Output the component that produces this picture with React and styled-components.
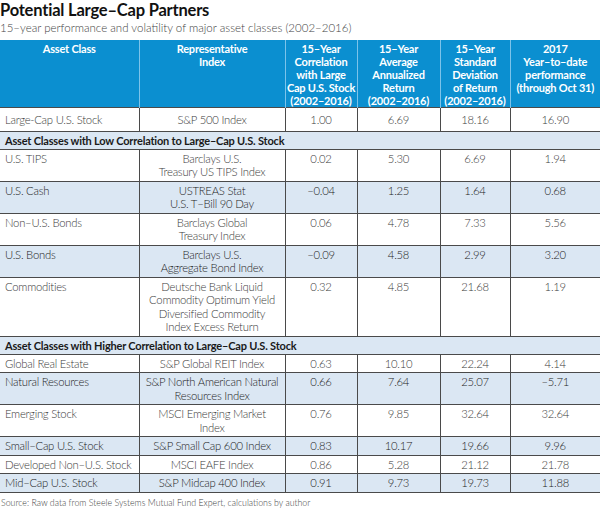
import styled, { createGlobalStyle } from 'styled-components';

const GlobalStyle = createGlobalStyle`
  html, body {
    margin: 0;
    padding: 0;
    background: #ffffff;
  }
  body {
    font-family: Lato, "Open Sans", "Liberation Sans", sans-serif;
    color: #3a3a3a;
  }
`;

const COLS = [139, 146, 72, 83, 70, 90];

const HEAD = [
  ['Asset Class'],
  ['Representative', 'Index'],
  ['15–Year', 'Correlation', 'with Large', 'Cap U.S. Stock', '(2002–2016)'],
  ['15–Year', 'Average', 'Annualized', 'Return', '(2002–2016)'],
  ['15–Year', 'Standard', 'Deviation', 'of Return', '(2002–2016)'],
  ['2017', 'Year–to–date', 'performance', '(through Oct 31)'],
];

const SECTIONS = [
  {
    rows: [
      { name: 'Large-Cap U.S. Stock', index: ['S&P 500 Index'], vals: ['1.00', '6.69', '18.16', '16.90'], tall: true },
    ],
  },
  {
    title: 'Asset Classes with Low Correlation to Large–Cap U.S. Stock',
    rows: [
      { name: 'U.S. TIPS', index: ['Barclays U.S.', 'Treasury US TIPS Index'], vals: ['0.02', '5.30', '6.69', '1.94'] },
      { name: 'U.S. Cash', index: ['USTREAS Stat', 'U.S. T–Bill 90 Day'], vals: ['–0.04', '1.25', '1.64', '0.68'], shaded: true },
      { name: 'Non–U.S. Bonds', index: ['Barclays Global', 'Treasury Index'], vals: ['0.06', '4.78', '7.33', '5.56'] },
      { name: 'U.S. Bonds', index: ['Barclays U.S.', 'Aggregate Bond Index'], vals: ['–0.09', '4.58', '2.99', '3.20'], shaded: true },
      {
        name: 'Commodities',
        index: ['Deutsche Bank Liquid', 'Commodity Optimum Yield', 'Diversified Commodity', 'Index Excess Return'],
        vals: ['0.32', '4.85', '21.68', '1.19'],
      },
    ],
  },
  {
    title: 'Asset Classes with Higher Correlation to Large–Cap U.S. Stock',
    rows: [
      { name: 'Global Real Estate', index: ['S&P Global REIT Index'], vals: ['0.63', '10.10', '22.24', '4.14'] },
      { name: 'Natural Resources', index: ['S&P North American Natural', 'Resources Index'], vals: ['0.66', '7.64', '25.07', '–5.71'], shaded: true },
      { name: 'Emerging Stock', index: ['MSCI Emerging Market', 'Index'], vals: ['0.76', '9.85', '32.64', '32.64'] },
      { name: 'Small–Cap U.S. Stock', index: ['S&P Small Cap 600 Index'], vals: ['0.83', '10.17', '19.66', '9.96'], shaded: true },
      { name: 'Developed Non–U.S. Stock', index: ['MSCI EAFE Index'], vals: ['0.86', '5.28', '21.12', '21.78'] },
      { name: 'Mid–Cap U.S. Stock', index: ['S&P Midcap 400 Index'], vals: ['0.91', '9.73', '19.73', '11.88'], shaded: true },
    ],
  },
];

const Page = styled.div`
  width: 600px;
  height: 515px;
  overflow: hidden;
`;

const Title = styled.h1`
  margin: 0;
  font-family: Lato, "Liberation Sans", sans-serif;
  font-weight: 700;
  font-size: 16.5px;
  line-height: 21px;
  letter-spacing: -0.2px;
  color: #111111;
`;

const Subtitle = styled.p`
  margin: 0 0 5px;
  font-weight: 300;
  font-size: 11.5px;
  line-height: 14px;
  color: #444444;
`;

const Table = styled.table`
  width: 600px;
  border-collapse: collapse;
  table-layout: fixed;
`;

const HeadCell = styled.th`
  background: #0b8fd0;
  color: #ffffff;
  font-weight: 700;
  font-size: 11px;
  line-height: 13px;
  letter-spacing: -0.2px;
  white-space: nowrap;
  text-align: center;
  vertical-align: top;
  padding: 2px 0 0;
  height: 65px;
  border-left: 1px solid #7cc3ea;
  &:first-child {
    border-left: none;
  }
`;

const Row = styled.tr`
  background: ${(p) => (p.$shaded ? '#dbe7f3' : '#ffffff')};
  border-top: 1px solid #4a4a4a;
`;

const Cell = styled.td`
  font-weight: 300;
  font-size: 11.3px;
  line-height: 13.5px;
  letter-spacing: -0.25px;
  white-space: nowrap;
  color: ${(p) => (p.$shaded ? '#1c1c1c' : '#3a3a3a')};
  text-align: ${(p) => (p.$left ? 'left' : 'center')};
  vertical-align: top;
  padding: ${(p) => (p.$tall ? '5px' : '2px')} 2px ${(p) => (p.$tall ? '4px' : '2px')} ${(p) => (p.$left ? '5px' : '2px')};
  border-left: 1px solid #4a4a4a;
  &:first-child {
    border-left: none;
  }
`;

const SectionCell = styled.td`
  background: #dbe7f3;
  font-weight: 700;
  font-size: 11px;
  line-height: 14px;
  letter-spacing: -0.2px;
  color: #1a1a1a;
  padding: 2px 5px 1px;
`;

const Source = styled.p`
  margin: 4px 0 0 1px;
  font-weight: 300;
  font-size: 8.8px;
  line-height: 11px;
  color: #444444;
`;

const Lines = ({ items }) =>
  items.map((t, i) => (
    <span key={i}>
      {t}
      {i < items.length - 1 && <br />}
    </span>
  ));

export default function App() {
  return (
    <Page>
      <GlobalStyle />
      <Title>Potential Large–Cap Partners</Title>
      <Subtitle>15–year performance and volatility of major asset classes (2002–2016)</Subtitle>
      <Table>
        <colgroup>
          {COLS.map((w, i) => (
            <col key={i} style={{ width: w }} />
          ))}
        </colgroup>
        <thead>
          <tr>
            {HEAD.map((h, i) => (
              <HeadCell key={i}>
                <Lines items={h} />
              </HeadCell>
            ))}
          </tr>
        </thead>
        <tbody>
          {SECTIONS.map((s, si) => [
            s.title && (
              <Row key={`t${si}`} $shaded>
                <SectionCell colSpan={6}>{s.title}</SectionCell>
              </Row>
            ),
            ...s.rows.map((r) => (
              <Row key={r.name} $shaded={r.shaded}>
                <Cell $left $shaded={r.shaded} $tall={r.tall}>{r.name}</Cell>
                <Cell $shaded={r.shaded} $tall={r.tall}>
                  <Lines items={r.index} />
                </Cell>
                {r.vals.map((v, vi) => (
                  <Cell key={vi} $shaded={r.shaded} $tall={r.tall}>{v}</Cell>
                ))}
              </Row>
            )),
          ])}
          <Row>
            <td colSpan={6} style={{ padding: 0 }} />
          </Row>
        </tbody>
      </Table>
      <Source>Source: Raw data from Steele Systems Mutual Fund Expert, calculations by author</Source>
    </Page>
  );
}
